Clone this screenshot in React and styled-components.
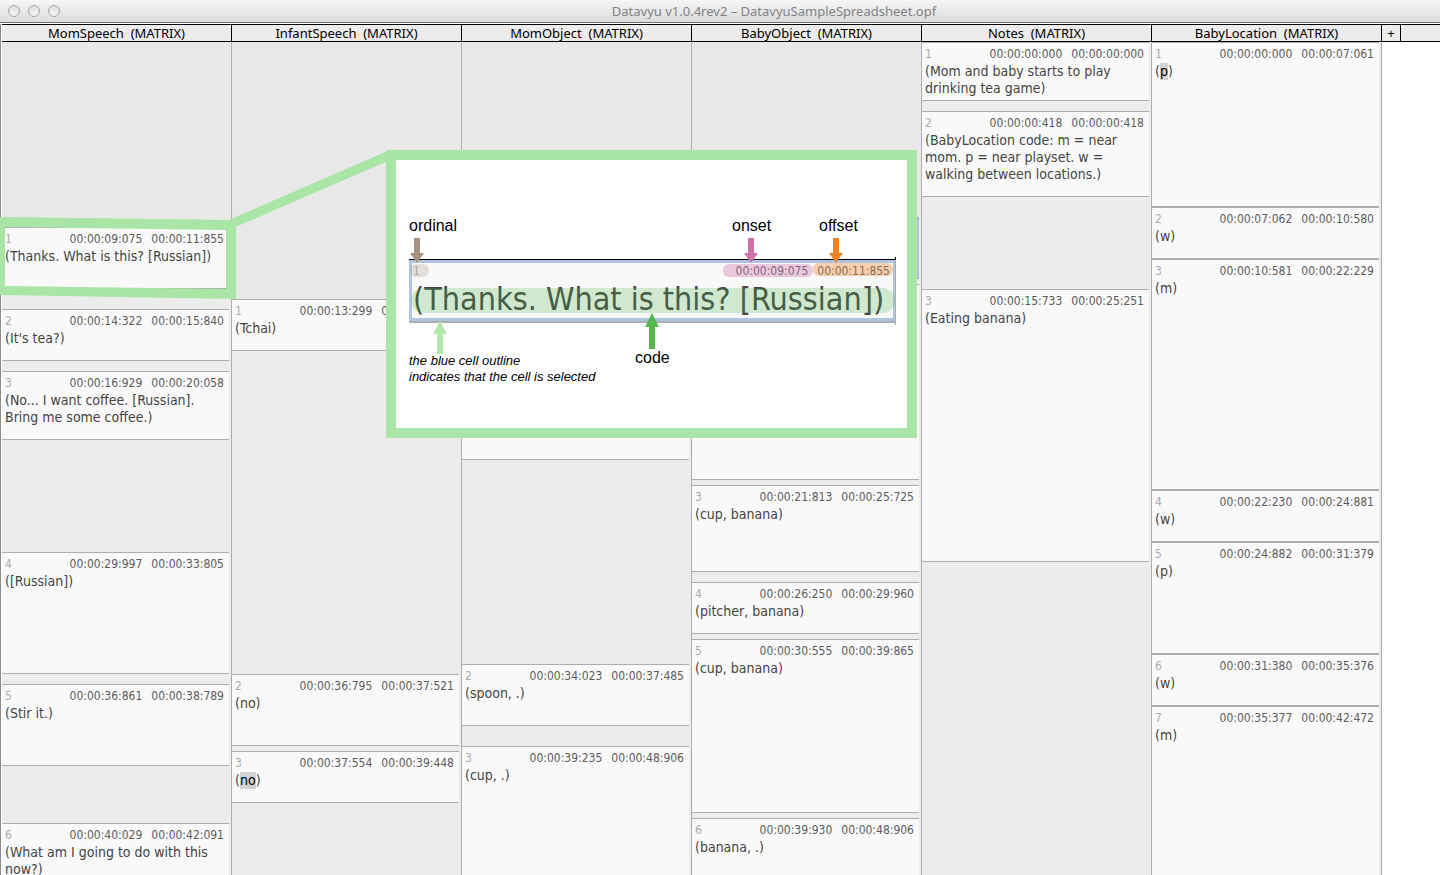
import React from "react";
import styled, { createGlobalStyle, css } from "styled-components";

const LINE = "#adadad";
const GREEN = "#a9e5a5";
const BLUE = "#b0c4e2";
const CELL_FONT = '"DejaVu Sans Condensed", "DejaVu Sans", sans-serif';
const UI_FONT = '"Noto Sans", "Open Sans", sans-serif';
const LABEL_FONT = '"Liberation Sans", Arial, sans-serif';

const GlobalStyle = createGlobalStyle`
  *, *::before, *::after { box-sizing: border-box; }
  body { margin: 0; background: #fff; }
`;

const Window = styled.div`
  position: relative;
  display: flex;
  flex-direction: column;
  height: 100vh;
  overflow: hidden;
  background: #fff;
`;

const TitleBar = styled.header`
  display: flex;
  align-items: center;
  flex: none;
  height: 23px;
  padding-left: 8px;
  background: linear-gradient(#f6f6f6, #dcdcdc);
  border-bottom: 1px solid #707070;
`;

const Lights = styled.div`
  display: flex;
  gap: 8px;
  width: 100px;
`;

const Light = styled.button`
  width: 12px;
  height: 12px;
  padding: 0;
  border: 1px solid #a6a6a6;
  border-radius: 50%;
  background: linear-gradient(#dedede, #f4f4f4);
`;

const Title = styled.h1`
  flex: 1;
  margin: 0;
  font: 400 13px/20px ${UI_FONT};
  color: #808285;
  text-align: center;
  white-space: nowrap;
`;

const Sheet = styled.main`
  display: flex;
  flex: 1;
  min-height: 0;
  margin-top: 1px;
  padding-left: 1px;
  border-left: 1px solid #8c8c8c;
`;

const Column = styled.section`
  display: flex;
  flex-direction: column;
  flex: 0 0 230px;
  min-height: 0;
`;

const ColumnHeader = styled.h2`
  flex: none;
  height: 18px;
  margin: 0;
  border: solid #000;
  border-width: 1px 1px 1px 0;
  background: #ececec;
  font: 400 13px/17px ${UI_FONT};
  color: #000;
  text-align: center;
  white-space: pre;
`;

const Track = styled.div`
  display: flex;
  flex-direction: column;
  flex: 1;
  min-height: 0;
  padding-right: 2px;
  border-right: 1px solid ${LINE};
  background: #ececec;
`;

const Gap = styled.div`
  flex: none;
  height: ${(p) => p.$size}px;
  margin-right: -2px;
  background: ${(p) => (p.$lead ? "#e8e8e8" : "#ececec")};
`;

const Cell = styled.article`
  flex: ${(p) => (p.$height ? "none" : "1 0 auto")};
  padding: 3px 5px 0 3px;
  border: solid ${LINE};
  border-width: ${(p) => (p.$height ? "1px 0" : "1px 0 0")};
  background: #f9f9f9;
  ${(p) => p.$height && css`height: ${p.$height}px;`}
  ${(p) => p.$selected && css`box-shadow: inset 0 0 0 3px ${BLUE};`}
`;

const Meta = styled.div`
  display: flex;
  gap: 9px;
  height: 17px;
  font: 12px/16px ${CELL_FONT};
  color: #5c5c5c;
`;

const Ordinal = styled.span`
  flex: 1;
  color: #acacac;
`;

const Code = styled.p`
  margin: 0;
  font: 14px/17px ${CELL_FONT};
  color: #444;
`;

const Picked = styled.mark`
  display: inline-block;
  background: #d2d2d2;
  color: #000;
`;

const Rest = styled.div`
  display: flex;
  flex: 1;
  height: 18px;
  border: solid #000;
  border-width: 1px 0;
  background: #ececec;
`;

const AddColumn = styled.button`
  width: 19px;
  padding: 0;
  border: 0;
  border-right: 1px solid #000;
  background: transparent;
  font: 13px/16px ${UI_FONT};
  color: #000;
`;

const Pointer = styled.svg`
  position: absolute;
  top: 0;
  left: 0;
  pointer-events: none;
`;

const Callout = styled.figure`
  position: absolute;
  top: 150px;
  left: 386px;
  width: 531px;
  height: 288px;
  margin: 0;
  padding: 99px 11px 0 13px;
  border: 10px solid ${GREEN};
  background: #fff;
`;

const BigCell = styled.div`
  height: 64px;
  border-top: 1px solid #000;
  border-bottom: 2px solid ${LINE};
  box-shadow: inset 0 0 0 3px ${BLUE};
  padding: 3px 6px 0 4px;
  background: #f9f9f9;
`;

const BigCode = styled.p`
  margin: 0;
  font: 32px/38px ${CELL_FONT};
  color: #444;
  white-space: nowrap;
`;

const Marks = styled.svg`
  position: absolute;
  top: -10px;
  left: -10px;
`;

const Label = styled.span`
  position: absolute;
  left: ${(p) => p.$x}px;
  top: ${(p) => p.$y}px;
  font: 16px/18px ${LABEL_FONT};
  color: #000;
`;

const Caption = styled.figcaption`
  position: absolute;
  left: 13px;
  top: 193px;
  font: italic 13px/16px ${LABEL_FONT};
  color: #000;
  white-space: pre;
`;

// Each cell: gap above it, height (none = runs to the bottom), onset, offset, code.
const columns = [
  {
    name: "MomSpeech",
    cells: [
      { gap: 185, height: 62, onset: "00:00:09:075", offset: "00:00:11:855", code: "(Thanks. What is this? [Russian])" },
      { gap: 20, height: 52, onset: "00:00:14:322", offset: "00:00:15:840", code: "(It's tea?)" },
      { gap: 10, height: 69, onset: "00:00:16:929", offset: "00:00:20:058", code: "(No... I want coffee. [Russian]. Bring me some coffee.)" },
      { gap: 112, height: 122, onset: "00:00:29:997", offset: "00:00:33:805", code: "([Russian])" },
      { gap: 10, height: 82, onset: "00:00:36:861", offset: "00:00:38:789", code: "(Stir it.)" },
      { gap: 57, onset: "00:00:40:029", offset: "00:00:42:091", code: "(What am I going to do with this now?)" },
    ],
  },
  {
    name: "InfantSpeech",
    cells: [
      { gap: 257, height: 52, onset: "00:00:13:299", offset: "00:00:14:310", code: "(Tchai)" },
      { gap: 323, height: 72, onset: "00:00:36:795", offset: "00:00:37:521", code: "(no)" },
      { gap: 5, height: 52, onset: "00:00:37:554", offset: "00:00:39:448", picked: "no" },
    ],
  },
  {
    name: "MomObject",
    cells: [
      { gap: 257, height: 161, onset: "", offset: "", code: "" },
      { gap: 204, height: 62, onset: "00:00:34:023", offset: "00:00:37:485", code: "(spoon, .)" },
      { gap: 20, onset: "00:00:39:235", offset: "00:00:48:906", code: "(cup, .)" },
    ],
  },
  {
    name: "BabyObject",
    cells: [
      { gap: 175, height: 62, selected: true, onset: "", offset: "", code: "" },
      { gap: 5, height: 196, onset: "", offset: "", code: "" },
      { gap: 5, height: 87, onset: "00:00:21:813", offset: "00:00:25:725", code: "(cup, banana)" },
      { gap: 10, height: 52, onset: "00:00:26:250", offset: "00:00:29:960", code: "(pitcher, banana)" },
      { gap: 5, height: 174, onset: "00:00:30:555", offset: "00:00:39:865", code: "(cup, banana)" },
      { gap: 5, onset: "00:00:39:930", offset: "00:00:48:906", code: "(banana, .)" },
    ],
  },
  {
    name: "Notes",
    cells: [
      { gap: 0, height: 59, onset: "00:00:00:000", offset: "00:00:00:000", code: "(Mom and baby starts to play drinking tea game)" },
      { gap: 10, height: 86, onset: "00:00:00:418", offset: "00:00:00:418", code: "(BabyLocation code: m = near mom. p = near playset. w = walking between locations.)" },
      { gap: 92, height: 273, onset: "00:00:15:733", offset: "00:00:25:251", code: "(Eating banana)" },
    ],
  },
  {
    name: "BabyLocation",
    cells: [
      { gap: 0, height: 165, onset: "00:00:00:000", offset: "00:00:07:061", picked: "p" },
      { gap: 0, height: 52, onset: "00:00:07:062", offset: "00:00:10:580", code: "(w)" },
      { gap: 0, height: 231, onset: "00:00:10:581", offset: "00:00:22:229", code: "(m)" },
      { gap: 0, height: 52, onset: "00:00:22:230", offset: "00:00:24:881", code: "(w)" },
      { gap: 0, height: 112, onset: "00:00:24:882", offset: "00:00:31:379", code: "(p)" },
      { gap: 0, height: 52, onset: "00:00:31:380", offset: "00:00:35:376", code: "(w)" },
      { gap: 0, onset: "00:00:35:377", offset: "00:00:42:472", code: "(m)" },
    ],
  },
];

function SheetCell({ cell, ordinal }) {
  return (
    <Cell $height={cell.height} $selected={cell.selected}>
      {cell.onset && (
        <>
          <Meta>
            <Ordinal>{ordinal}</Ordinal>
            <span>{cell.onset}</span>
            <span>{cell.offset}</span>
          </Meta>
          <Code>{cell.picked ? <>(<Picked>{cell.picked}</Picked>)</> : cell.code}</Code>
        </>
      )}
    </Cell>
  );
}

function SheetColumn({ column }) {
  return (
    <Column>
      <ColumnHeader>{column.name + "  (MATRIX)"}</ColumnHeader>
      <Track>
        {column.cells.map((cell, i) => (
          <React.Fragment key={i}>
            <Gap $size={cell.gap} $lead={i === 0} />
            <SheetCell cell={cell} ordinal={i + 1} />
          </React.Fragment>
        ))}
      </Track>
    </Column>
  );
}

export default function App() {
  return (
    <>
      <GlobalStyle />
      <Window>
        <TitleBar>
          <Lights>
            <Light aria-label="Close" />
            <Light aria-label="Minimize" />
            <Light aria-label="Zoom" />
          </Lights>
          <Title>Datavyu v1.0.4rev2 – DatavyuSampleSpreadsheet.opf</Title>
        </TitleBar>
        <Sheet>
          {columns.map((column) => (
            <SheetColumn key={column.name} column={column} />
          ))}
          <Rest>
            <AddColumn aria-label="Add column">+</AddColumn>
          </Rest>
        </Sheet>
        <Pointer width="400" height="310" aria-hidden="true">
          <path fill={GREEN} fillRule="evenodd" d="M0 217L232 220L236 224V299L0 295ZM5 227V286L226 289V230Z" />
          <path stroke={GREEN} strokeWidth="9" d="M231 224L390 155" />
        </Pointer>
        <Callout>
          <BigCell>
            <Meta>
              <Ordinal>1</Ordinal>
              <span>00:00:09:075</span>
              <span>00:00:11:855</span>
            </Meta>
            <BigCode>(Thanks. What is this? [Russian])</BigCode>
          </BigCell>
          <Marks width="531" height="288" viewBox="386 150 531 288" aria-hidden="true">
            <rect x="410" y="264" width="19" height="13" rx="6" fill="#a6907e" fillOpacity=".25" />
            <rect x="723" y="264" width="90" height="13" rx="6" fill="#d071a9" fillOpacity=".35" />
            <rect x="813" y="263" width="80" height="13" rx="6" fill="#f08228" fillOpacity=".35" />
            <rect x="411" y="288" width="484" height="25" rx="12" fill="#55b54f" fillOpacity=".24" />
            <path fill="#a6907e" d="M414 238h6v15h4l-7 10l-7-10h4z" />
            <path fill="#d071a9" d="M748 238h6v15h4l-7 10l-7-10h4z" />
            <path fill="#f08228" d="M833 238h6v15h4l-7 10l-7-10h4z" />
            <path fill="#b1e8ad" d="M437 354h6v-20h4l-7-13l-7 13h4z" />
            <path fill="#55b54f" d="M649 349h6v-22h4l-7-14l-7 14h4z" />
            <rect x="895" y="257" width="1" height="3" fill="#000" />
            <rect x="895" y="260" width="1" height="65" fill={LINE} />
          </Marks>
          <Label $x={13} $y={57}>ordinal</Label>
          <Label $x={336} $y={57}>onset</Label>
          <Label $x={423} $y={57}>offset</Label>
          <Label $x={239} $y={189}>code</Label>
          <Caption>{"the blue cell outline\nindicates that the cell is selected"}</Caption>
        </Callout>
      </Window>
    </>
  );
}
